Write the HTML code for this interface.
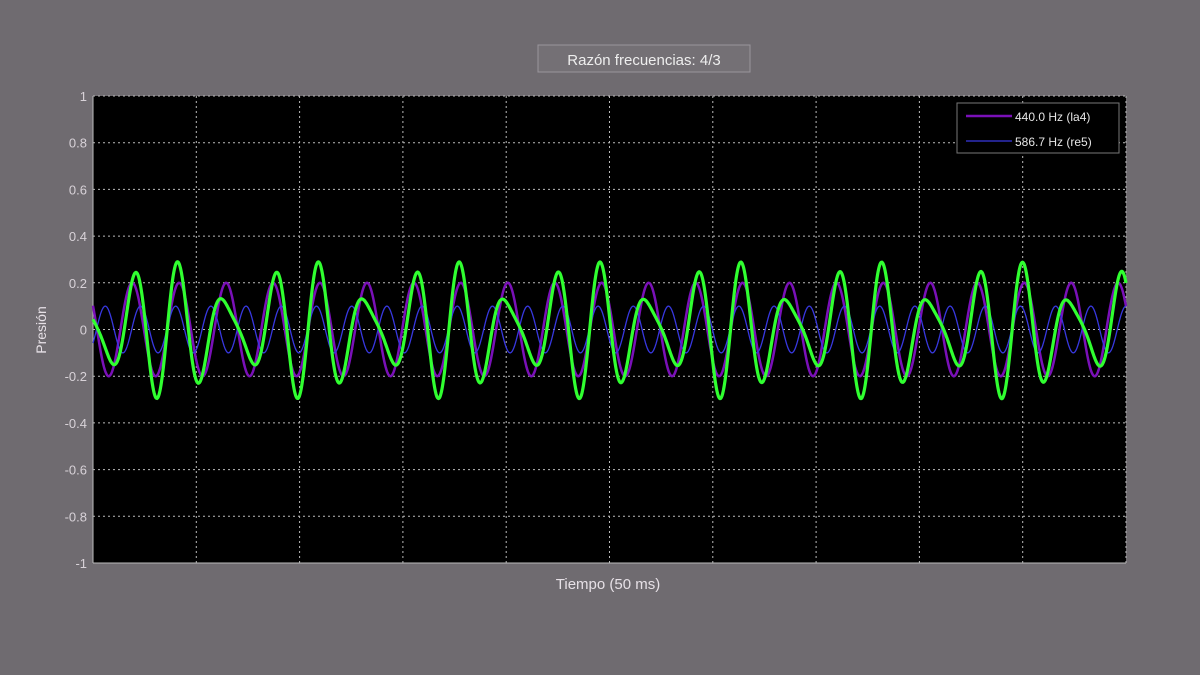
<!DOCTYPE html>
<html><head><meta charset="utf-8"><style>
body{margin:0;width:1200px;height:675px;background:#6f6b70;overflow:hidden;font-family:"Liberation Sans",sans-serif}
svg{position:absolute;left:0;top:0}
</style></head><body>
<svg id="s" width="1200" height="675" xmlns="http://www.w3.org/2000/svg">
<rect x="538" y="45" width="212" height="27" fill="#747075" stroke="#9a969b" stroke-width="1"/>
<text x="644" y="65" text-anchor="middle" font-size="15" fill="#eeeeee">Razón frecuencias: 4/3</text>
<rect x="93" y="96" width="1033" height="467" fill="#000"/>
<g id="grid" stroke="#bbb" stroke-width="1" stroke-dasharray="2,3"></g>
<g id="lab" font-size="13" fill="#d8d2d8" text-anchor="end"></g>
<line x1="93" y1="96" x2="93" y2="563" stroke="#bbb"/>
<line x1="93" y1="563" x2="1126" y2="563" stroke="#bbb"/>
<path id="pu" fill="none" stroke="#7a10b8" stroke-width="2.5"/>
<path id="bl" fill="none" stroke="#3838e0" stroke-width="1.3"/>
<path id="gr" fill="none" stroke="#30ff30" stroke-width="3.2"/>
<rect x="957" y="103" width="162" height="50" fill="#000" stroke="#777"/>
<line x1="966" y1="116" x2="1012" y2="116" stroke="#7a10b8" stroke-width="2.5"/>
<line x1="966" y1="141" x2="1012" y2="141" stroke="#3838e0" stroke-width="1.3"/>
<text x="1015" y="121" font-size="12" fill="#e6e6e6">440.0 Hz (la4)</text>
<text x="1015" y="146" font-size="12" fill="#e6e6e6">586.7 Hz (re5)</text>
<text x="608" y="589" text-anchor="middle" font-size="15" fill="#e6e0e6">Tiempo (50 ms)</text>
<text transform="translate(46,330) rotate(-90)" text-anchor="middle" font-size="14" fill="#e6e0e6">Presión</text>
</svg>
<script>
var ns="http://www.w3.org/2000/svg",g=document.getElementById('grid'),l=document.getElementById('lab');
function el(p,t,a,txt){var e=document.createElementNS(ns,t);for(var k in a)e.setAttribute(k,a[k]);if(txt)e.textContent=txt;p.appendChild(e);}
var y0=329.5,sc=233.5;
for(var i=1;i<=10;i++){var x=93+i*103.3;el(g,'line',{x1:x,y1:96,x2:x,y2:563});}
for(var i=-5;i<=5;i++){var y=y0-i*0.2*sc;if(i>-5)el(g,'line',{x1:93,y1:y,x2:1126,y2:y});
var v=(i*0.2);var t=(i==0)?'0':(i==5?'1':(i==-5?'-1':v.toFixed(1)));el(l,'text',{x:87,y:y+5},t);}
var P=46.95,B=35.2,pu='',bl='',gr='';
for(var x=93;x<=1126;x+=0.5){var a=0.2*Math.cos(2*Math.PI*(x-320)/P),b=0.1*Math.cos(2*Math.PI*(x-320)/B+Math.PI/5);
var c=(x==93?'M':'L');pu+=c+x+' '+(y0-a*sc).toFixed(1);bl+=c+x+' '+(y0-b*sc).toFixed(1);gr+=c+x+' '+(y0-(a+b)*sc).toFixed(1);}
document.getElementById('pu').setAttribute('d',pu);document.getElementById('bl').setAttribute('d',bl);document.getElementById('gr').setAttribute('d',gr);
</script>
</body></html>
